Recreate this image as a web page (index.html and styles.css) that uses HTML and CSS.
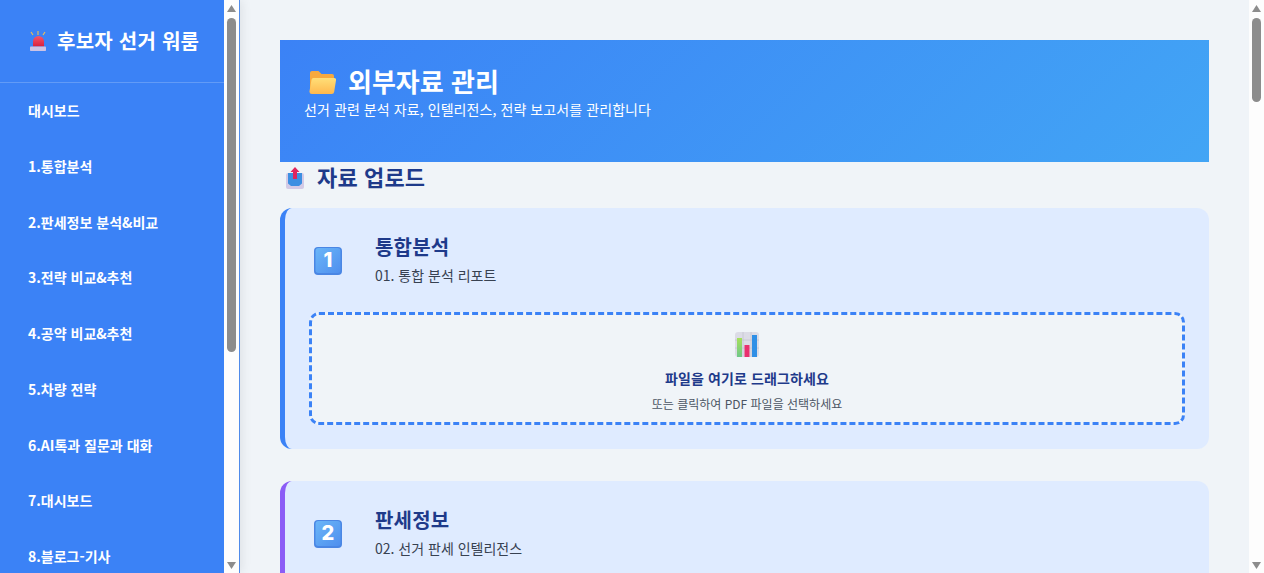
FILE: index.html
```html
<!DOCTYPE html>
<html lang="ko">
<head>
    <meta charset="UTF-8">
    <meta name="viewport" content="width=device-width, initial-scale=1.0">
    <title>외부자료 관리</title>
    <link rel="stylesheet" href="styles.css">
</head>
<body>

<svg class="icon-defs" width="0" height="0" aria-hidden="true">
    <defs>
        <linearGradient id="key-blue" x1="0" y1="0" x2="1" y2="1">
            <stop offset="0" stop-color="#6ab6f8"/>
            <stop offset="1" stop-color="#4f8fee"/>
        </linearGradient>
        <linearGradient id="folder-front" x1="0" y1="0" x2="0" y2="1">
            <stop offset="0" stop-color="#ffdf78"/>
            <stop offset="1" stop-color="#ffb84e"/>
        </linearGradient>
        <linearGradient id="siren-dome" x1="0" y1="0" x2="0" y2="1">
            <stop offset="0" stop-color="#f4566c"/>
            <stop offset="1" stop-color="#d81f3c"/>
        </linearGradient>
        <linearGradient id="bar-green" x1="0" y1="0" x2="0" y2="1">
            <stop offset="0" stop-color="#a6e05a"/>
            <stop offset="1" stop-color="#6fc78a"/>
        </linearGradient>
        <symbol id="key-cap" viewBox="0 0 28 28">
            <rect x="0" y="0" width="28" height="28" rx="4" fill="#4a86e4"/>
            <rect x="1.500" y="1" width="25" height="25" rx="3" fill="url(#key-blue)"/>
        </symbol>
        <symbol id="bar-chart" viewBox="0 0 24 25">
            <rect width="24" height="25" rx="3" fill="#dcdce6"/>
            <path d="M8 0v25M16 0v25M0 8h24M0 16h24" stroke="#c4c4d0" stroke-width="0.800"/>
            <rect x="2" y="6" width="5" height="19" fill="url(#bar-green)"/>
            <rect x="9.500" y="13" width="5" height="12" fill="#e9306e"/>
            <rect x="17" y="3" width="5" height="22" fill="#2f8fe6"/>
        </symbol>
    </defs>
</svg>

<div class="layout">
    <aside class="sidebar">
        <div class="sidebar-body">
            <div class="brand">
                <svg class="brand-icon" viewBox="0 0 16 20">
                    <path d="M1 1l2 3M8 0v4M15 1l-2 3" stroke="#f0c050" stroke-width="1.100" fill="none"/>
                    <path d="M3 15.500V10.500a5.500 5.500 0 0 1 11 0v5z" fill="url(#siren-dome)"/>
                    <rect x="0" y="15.500" width="16" height="4.500" rx="0.800" fill="#cdc3e4"/>
                </svg>
                <span>후보자 선거 워룸</span>
            </div>
            <nav class="nav">
                <a class="nav-item" href="#">대시보드</a>
                <a class="nav-item" href="#">1.통합분석</a>
                <a class="nav-item" href="#">2.판세정보 분석&amp;비교</a>
                <a class="nav-item" href="#">3.전략 비교&amp;추천</a>
                <a class="nav-item" href="#">4.공약 비교&amp;추천</a>
                <a class="nav-item" href="#">5.차량 전략</a>
                <a class="nav-item" href="#">6.AI톡과 질문과 대화</a>
                <a class="nav-item" href="#">7.대시보드</a>
                <a class="nav-item" href="#">8.블로그-기사</a>
            </nav>
        </div>
        <div class="scrollbar">
            <span class="arrow-up"></span>
            <span class="thumb thumb-side"></span>
            <span class="arrow-down"></span>
        </div>
    </aside>

    <main class="main">
        <header class="hero">
            <h1 class="hero-title">
                <svg class="hero-icon" viewBox="0 0 27 23">
                    <path d="M1 19V2a2 2 0 0 1 2-2h6.500l3 3H23a2 2 0 0 1 2 2v14z" fill="#f7a93e"/>
                    <path d="M4.500 7H25a2 2 0 0 1 2 2.300L25.200 20.800A2.600 2.600 0 0 1 22.600 23H3a2.500 2.500 0 0 1-2.500-2.800L2.500 8.800A2 2 0 0 1 4.500 7z" fill="url(#folder-front)"/>
                </svg>
                외부자료 관리
            </h1>
            <p class="hero-desc">선거 관련 분석 자료, 인텔리전스, 전략 보고서를 관리합니다</p>
        </header>

        <h2 class="section-title">
            <svg class="section-icon" viewBox="0 0 18 22">
                <rect x="0" y="6" width="18" height="16" rx="2" fill="#d3cae6"/>
                <path d="M2 6h14v10.500L13 19H5l-3-2.500z" fill="#3d8fe2"/>
                <path d="M9 0l4.500 5H11v7H7V5H4.500z" fill="#e0245e"/>
            </svg>
            자료 업로드
        </h2>

        <section class="card">
            <div class="card-head">
                <div class="key-icon">
                    <svg viewBox="0 0 28 28"><use href="#key-cap"/></svg>
                    <span>1</span>
                </div>
                <div class="card-text">
                    <h3 class="card-title">통합분석</h3>
                    <p class="card-sub">01. 통합 분석 리포트</p>
                </div>
            </div>
            <div class="dropzone">
                <svg class="drop-icon" viewBox="0 0 24 25"><use href="#bar-chart"/></svg>
                <p class="drop-title">파일을 여기로 드래그하세요</p>
                <p class="drop-sub">또는 클릭하여 PDF 파일을 선택하세요</p>
            </div>
        </section>

        <section class="card card-purple">
            <div class="card-head">
                <div class="key-icon">
                    <svg viewBox="0 0 28 28"><use href="#key-cap"/></svg>
                    <span>2</span>
                </div>
                <div class="card-text">
                    <h3 class="card-title">판세정보</h3>
                    <p class="card-sub">02. 선거 판세 인텔리전스</p>
                </div>
            </div>
        </section>
    </main>

    <div class="scrollbar">
        <span class="arrow-up"></span>
        <span class="thumb thumb-main"></span>
        <span class="arrow-down"></span>
    </div>
</div>

</body>
</html>
```

FILE: styles.css
```css
* {
    box-sizing: border-box;
}
html, body {
    height: 100%;
    overflow: hidden;
}
body {
    margin: 0;
    font-family: "Noto Sans CJK KR", "Noto Sans", sans-serif;
    background-color: #f0f4f8;
    color: #1e3a8a;
}
p, h1, h2, h3 {
    margin: 0;
}
.icon-defs {
    position: absolute;
}
.layout {
    display: flex;
    height: 100%;
}

/* sidebar */
.sidebar {
    flex: 0 0 240px;
    display: flex;
    height: 100%;
    border-right: 1px solid #4f8bea;
    box-shadow: 2px 0 10px rgba(0,0,0,0.08);
}
.sidebar-body {
    flex: 1;
    overflow: hidden;
    background: #3b82f6;
}
.brand {
    display: flex;
    align-items: center;
    gap: 11px;
    height: 83px;
    padding: 0 0 2px 30px;
    border-bottom: 1px solid rgba(255,255,255,0.2);
    color: #fff;
    font-size: 20px;
    font-weight: 700;
    letter-spacing: 0.25px;
    white-space: nowrap;
}
.brand-icon {
    width: 16px;
    height: 20px;
    margin-top: 2px;
    flex: none;
}
.nav {
    display: flex;
    flex-direction: column;
}
.nav-item {
    display: block;
    flex: none;
    height: 55.75px;
    padding-left: 28px;
    line-height: 54px;
    color: #fff;
    font-size: 14px;
    font-weight: 700;
    text-decoration: none;
    white-space: nowrap;
}

/* scrollbars */
.scrollbar {
    flex: 0 0 15px;
    display: flex;
    flex-direction: column;
    align-items: center;
    height: 100%;
    padding: 5px 0 4px;
    background: #fdfdfd;
}
.arrow-up, .arrow-down {
    flex: none;
    width: 9px;
    height: 7px;
    background: #8c8c8c;
}
.arrow-up {
    clip-path: polygon(50% 0, 100% 100%, 0 100%);
}
.arrow-down {
    margin-top: auto;
    clip-path: polygon(0 0, 100% 0, 50% 100%);
}
.thumb {
    width: 9px;
    margin-top: 6px;
    border-radius: 5px;
    background: #8c8c8c;
}
.thumb-side {
    height: 334px;
}
.thumb-main {
    height: 84px;
}

/* main */
.main {
    flex: 1;
    min-width: 0;
    height: 100%;
    overflow: hidden;
    padding: 40px;
}
.hero {
    height: 122px;
    padding: 23px 24px;
    background: linear-gradient(135deg, #3b82f6, #42a5f5);
    color: #fff;
}
.hero-title {
    display: flex;
    align-items: center;
    gap: 12px;
    height: 34px;
    padding-left: 5px;
    font-size: 26px;
    font-weight: 700;
}
.hero-icon {
    width: 27px;
    height: 23px;
    margin-top: 4px;
}
.hero-desc {
    margin-top: 2px;
    font-size: 14px;
    line-height: 20px;
    letter-spacing: 0.08px;
}
.section-title {
    display: flex;
    align-items: center;
    gap: 13px;
    height: 28px;
    margin-bottom: 18px;
    padding-left: 6px;
    font-size: 22px;
    font-weight: 700;
    letter-spacing: 0.15px;
}
.section-icon {
    width: 18px;
    height: 22px;
    margin-top: 4px;
}
.card {
    height: 241px;
    margin-bottom: 32px;
    padding: 24px;
    border-left: 5px solid #3b82f6;
    border-radius: 12px;
    background: #dfebff;
}
.card-purple {
    border-left-color: #8b5cf6;
}
.card-head {
    display: flex;
    align-items: center;
    height: 58px;
    margin-bottom: 22px;
    padding-left: 5px;
}
.key-icon {
    position: relative;
    flex: none;
    width: 28px;
    height: 28px;
    margin-right: 33px;
}
.key-icon svg {
    display: block;
    width: 28px;
    height: 28px;
}
.key-icon span {
    position: absolute;
    inset: 0;
    text-align: center;
    line-height: 27px;
    color: #fff;
    font-family: "Inter", sans-serif;
    font-size: 20px;
    font-weight: 800;
}
.card-text {
    align-self: flex-start;
}
.card-title {
    font-size: 20px;
    line-height: 30px;
    font-weight: 700;
    letter-spacing: 0.2px;
}
.card-sub {
    margin-top: 3px;
    font-size: 14px;
    line-height: 20px;
    color: #374151;
}
.dropzone {
    height: 113px;
    padding-top: 17px;
    border: 3px dashed #3b82f6;
    border-radius: 10px;
    background: #f0f4f8;
    text-align: center;
}
.drop-icon {
    display: block;
    width: 24px;
    height: 25px;
    margin: 0 auto;
}
.drop-title {
    margin-top: 11px;
    font-size: 14px;
    line-height: 20px;
    font-weight: 700;
    letter-spacing: 0.1px;
}
.drop-sub {
    margin-top: 8px;
    font-size: 12px;
    line-height: 16px;
    color: #4b5563;
}
```
